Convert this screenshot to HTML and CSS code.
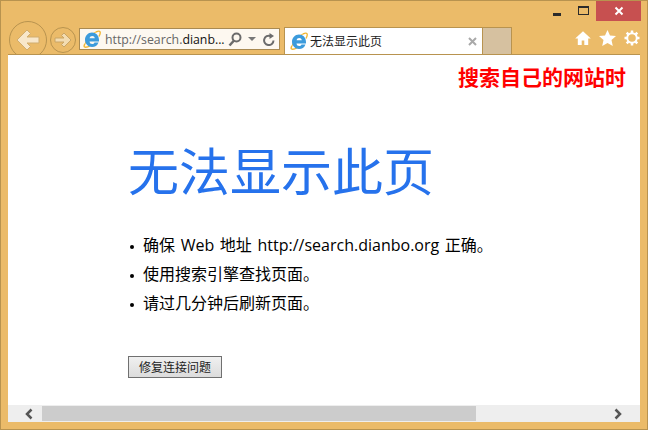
FILE: index.html
```html
<!DOCTYPE html>
<html lang="zh-CN">
<head>
  <meta charset="UTF-8">
  <title>无法显示此页</title>
  <link rel="stylesheet" href="styles.css">
</head>
<body>
<svg class="defs" width="0" height="0">
  <symbol id="ie" viewBox="0 0 18 18">
    <path d="M2 14C-.5 17.500 2.500 18.500 7.500 15.500M13 2C17 0 18.500 1.500 16 6.500" fill="none" stroke="#f2b632" stroke-width="1.400"/>
    <path d="M2 14C4 8 8 4 13 2" fill="none" stroke="#f2b632" stroke-width="1"/>
    <path d="M15.500 12.500C14.500 15.500 12 17 9 17 5 17 2 13.800 2 9.800S5 2.500 9 2.500s7 3 7 7.500v1.500H6.500c.2 1.700 1.200 2.500 2.700 2.500 1.100 0 1.900-.5 2.300-1.500zM6.600 8.300h5.200C11.600 6.900 10.600 6 9.200 6S6.900 6.900 6.600 8.300z" fill="#3c9bdc"/>
  </symbol>
</svg>
<div class="window">
  <div class="titlebar">
    <div class="win-btn win-min"><span></span></div>
    <div class="win-btn win-max"><span></span></div>
    <div class="win-btn win-close">
      <svg width="10" height="10" viewBox="0 0 10 10"><path d="M1.500 1.500l7 7M8.500 1.500l-7 7" stroke="#fff" stroke-width="2"/></svg>
    </div>
  </div>
  <div class="toolbar">
    <svg class="nav-back" width="38" height="38" viewBox="0 0 38 38">
      <circle cx="19" cy="19" r="18.500" fill="none" stroke="#b8934f"/>
      <path d="M8 19l10-10 3.500 3.500-3.500 3.500h12v6H18l3.500 3.500L18 29z" fill="#f8e7ca" stroke="#d1ad6f" stroke-linejoin="round"/>
    </svg>
    <svg class="nav-forward" width="26" height="26" viewBox="0 0 26 26">
      <circle cx="13" cy="13" r="12.500" fill="none" stroke="#b8934f"/>
      <path d="M21 13l-7-7-2.500 2.500 2.500 2.500H5v4h9l-2.500 2.500L14 20z" fill="#f3dcb1" stroke="#c9a566" stroke-linejoin="round"/>
    </svg>
    <div class="address">
      <svg class="ie-icon" width="18" height="18"><use href="#ie"/></svg>
      <div class="url"><span class="url-dim">http://search.</span>dianb...</div>
      <svg class="addr-search" width="14" height="15" viewBox="0 0 14 15">
        <circle cx="8.500" cy="5.500" r="4" fill="none" stroke="#6b6b6b" stroke-width="2"/>
        <path d="M6 8.500l-4.500 5" stroke="#6b6b6b" stroke-width="2.500"/>
      </svg>
      <svg class="addr-drop" width="8" height="4" viewBox="0 0 8 4"><path d="M0 0h8L4 4z" fill="#777"/></svg>
      <svg class="addr-refresh" width="12" height="13" viewBox="0 0 12 13">
        <path d="M10.500 7.500A4.700 4.700 0 1 1 7.500 3" fill="none" stroke="#6b6b6b" stroke-width="2"/>
        <path d="M6.500 0v6L11 3z" fill="#6b6b6b"/>
      </svg>
    </div>
    <div class="tab">
      <svg class="ie-icon" width="18" height="18"><use href="#ie"/></svg>
      <div class="tab-title">无法显示此页</div>
      <svg class="tab-close" width="9" height="9" viewBox="0 0 9 9"><path d="M1 1l7 7M8 1L1 8" stroke="#a9a9a9" stroke-width="2"/></svg>
    </div>
    <div class="tab-new"></div>
    <div class="tools">
      <svg width="16" height="14" viewBox="0 0 16 14"><path d="M8 .2L.2 7.500h2.600V14h3.900V9.500h2.600V14h3.900V7.500h2.600z" fill="#fff"/></svg>
      <svg width="17" height="16" viewBox="0 0 17 16"><path d="M8.500 0l2.500 5.500 6 .6-4.500 4 1.300 5.900-5.300-3-5.300 3 1.300-5.900L0 6.100l6-.6z" fill="#fff"/></svg>
      <svg width="16" height="16" viewBox="0 0 16 16"><path d="M8 .5v15M.5 8h15M2.700 2.700l10.600 10.600M13.300 2.700L2.700 13.300" stroke="#fff" stroke-width="2.500" stroke-dasharray="3 9.500"/><circle cx="8" cy="8" r="4.800" fill="none" stroke="#fff" stroke-width="2"/></svg>
    </div>
  </div>
  <div class="content">
    <div class="page">
      <div class="note">搜索自己的网站时</div>
      <h1 class="page-title">无法显示此页</h1>
      <ul class="tips">
        <li>确保 Web 地址 http://search.dianbo.org 正确。</li>
        <li>使用搜索引擎查找页面。</li>
        <li>请过几分钟后刷新页面。</li>
      </ul>
      <button class="fix-btn">修复连接问题</button>
    </div>
    <div class="scrollbar">
      <svg width="12" height="12" viewBox="0 0 12 12"><path d="M8.500 1.500L4 6l4.500 4.500" fill="none" stroke="#555" stroke-width="2.500"/></svg>
      <div class="track"><div class="thumb"></div></div>
      <svg width="12" height="12" viewBox="0 0 12 12"><path d="M3.500 1.500L8 6l-4.500 4.500" fill="none" stroke="#555" stroke-width="2.500"/></svg>
    </div>
  </div>
</div>
</body>
</html>
```
FILE: styles.css
```css
body {
    margin: 0;
    padding: 0;
    font-family: "Open Sans", "Noto Sans CJK SC", sans-serif;
}
.defs {
    display: block;
    height: 0;
}
.window {
    box-sizing: border-box;
    width: 648px;
    height: 430px;
    display: flex;
    flex-direction: column;
    background-color: #ebbb69;
    border: 1px solid #b8934f;
    overflow: hidden;
}
.titlebar {
    height: 20px;
    display: flex;
    justify-content: flex-end;
    padding-right: 6px;
}
.win-btn {
    height: 20px;
    display: flex;
    justify-content: center;
    align-items: center;
}
.win-min {
    width: 26px;
}
.win-min span {
    display: block;
    width: 8px;
    height: 3px;
    margin-top: 6px;
    background-color: #2b2b2b;
}
.win-max {
    width: 26px;
}
.win-max span {
    display: block;
    box-sizing: border-box;
    width: 11px;
    height: 9px;
    border: 1px solid #2b2b2b;
    border-top-width: 2px;
    margin-top: -2px;
}
.win-close {
    width: 45px;
    background-color: #c75050;
}
.toolbar {
    height: 33px;
    display: flex;
    align-items: flex-end;
    padding-left: 8px;
}
.nav-back {
    margin-bottom: -5px;
    flex: none;
}
.nav-forward {
    margin: 0 3px 1px 3px;
    flex: none;
}
.address {
    box-sizing: border-box;
    width: 201px;
    height: 22px;
    margin-bottom: 4px;
    display: flex;
    align-items: center;
    padding: 0 3px;
    background-color: #fdf8f0;
    border: 1px solid #a98a52;
}
.url {
    flex: 1;
    margin-left: 4px;
    font-size: 12.3px;
    color: #111;
    white-space: nowrap;
}
.url-dim {
    color: #666;
}
.addr-drop {
    margin: 0 7px 0 6px;
}
.addr-refresh {
    margin-right: 1px;
}
.tab {
    box-sizing: border-box;
    width: 199px;
    height: 27px;
    margin-left: 4px;
    display: flex;
    align-items: center;
    padding: 0 5px;
    background-color: #fff;
    border: 1px solid #b8934f;
    border-bottom: none;
}
.tab-title {
    flex: 1;
    margin-left: 2px;
    font-size: 12px;
    color: #222;
}
.tab-new {
    box-sizing: border-box;
    width: 29px;
    height: 27px;
    background-color: #d6c1a0;
    border: 1px solid #b8934f;
    border-left: none;
    border-bottom: none;
}
.tools {
    flex: 1;
    display: flex;
    justify-content: flex-end;
    align-items: center;
    gap: 8px;
    height: 27px;
    margin-right: 7px;
    margin-bottom: 3px;
}
.content {
    flex: 1;
    margin: 0 7px 7px;
    display: flex;
    flex-direction: column;
    background-color: #fff;
    border-top: 1px solid #b8934f;
    min-height: 0;
    position: relative;
}
.page {
    flex: 1;
    position: relative;
    padding: 84px 0 0 120px;
}
.note {
    position: absolute;
    top: 9px;
    right: 14px;
    font-size: 21px;
    line-height: 26px;
    font-weight: 700;
    color: #ff0000;
}
.page-title {
    margin: 0;
    font-size: 51px;
    line-height: 64px;
    font-weight: 400;
    color: #2672ec;
}
.tips {
    margin: 28px 0 0;
    padding: 0;
    list-style: none;
    font-size: 16px;
    line-height: 29px;
    word-spacing: 1.500px;
    color: #000;
}
.tips li {
    display: flex;
    align-items: center;
}
.tips li::before {
    content: "";
    flex: none;
    width: 4px;
    height: 4px;
    margin: 2px 9px 0 2px;
    border-radius: 50%;
    background-color: #000;
}
.fix-btn {
    display: block;
    box-sizing: border-box;
    width: 94px;
    height: 22px;
    margin-top: 38px;
    padding: 0;
    font-family: inherit;
    font-size: 12px;
    color: #222;
    background: linear-gradient(#f0f0f0, #dcdcdc);
    border: 1px solid #707070;
    border-radius: 0;
}
.scrollbar {
    height: 17px;
    display: flex;
    align-items: center;
    padding: 0 16px 0 15px;
    background-color: #eee;
}
.track {
    flex: 1;
    height: 15px;
    margin-left: 7px;
}
.thumb {
    width: 434px;
    height: 15px;
    background-color: #ccc;
}
```
